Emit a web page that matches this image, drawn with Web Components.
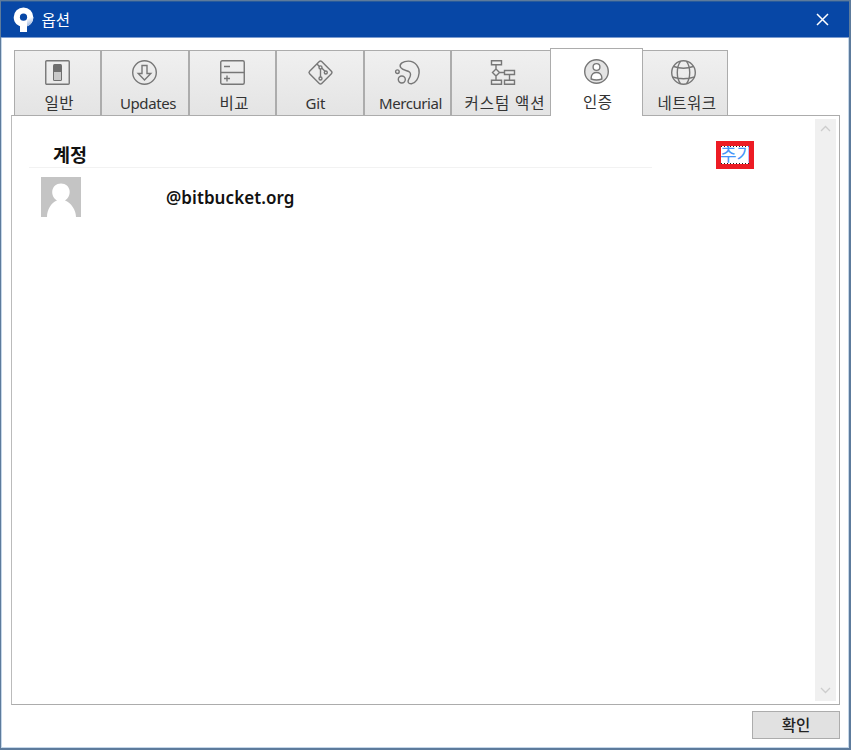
<!DOCTYPE html>
<html lang="ko"><head><meta charset="utf-8"><title>옵션</title>
<style>html,body{margin:0;height:100%;overflow:hidden}body{font-family:"Noto Sans","Noto Sans CJK KR",sans-serif;color:#333}</style></head><body>
<option-window>
<title-bar slot="title">옵션</title-bar>
<tab-strip slot="tabs">
<option-tab icon="general" style="width:87px;--icon:30px;--text:29.500px">일반</option-tab>
<option-tab icon="updates" style="width:88px;--icon:30px;--text:18px;--size:15px;--track:-.42px">Updates</option-tab>
<option-tab icon="compare" style="width:87px;--icon:30px;--text:29.500px">비교</option-tab>
<option-tab icon="git" style="width:88px;--icon:31px;--text:28.500px;--size:15px;--track:-.1px">Git</option-tab>
<option-tab icon="hg" style="width:87px;--icon:30px;--text:14px;--size:15px;--track:-.42px">Mercurial</option-tab>
<option-tab icon="custom" style="width:100px;--icon:38px;--text:12.500px;--track:.95px">커스텀 액션</option-tab>
<option-tab icon="auth" active style="width:93px;--icon:33px;--text:32px">인증</option-tab>
<option-tab icon="network" style="width:86px;--icon:28px;--text:14.500px;--track:.5px">네트워크</option-tab>
</tab-strip>
<account-panel slot="panel"><account-row>@bitbucket.org</account-row></account-panel>
<push-button slot="action">확인</push-button>
</option-window>
<script>
const define=(name,html,setup)=>customElements.define(name,class extends HTMLElement{
 constructor(){super();const t=document.createElement('template');t.innerHTML=html;this.attachShadow({mode:'open'}).append(t.content.cloneNode(true))}
 connectedCallback(){if(setup)setup(this)}
});
const icons={
general:'<rect x=".75" y=".75" width="23.5" height="23.5" rx="1"/><rect x="8" y="4" width="9" height="17" rx="1.5" fill="#6e6e6e" stroke="none"/><rect x="9" y="12" width="7" height="8" fill="#c8c8c8" stroke="none"/>',
updates:'<circle cx="12.5" cy="12.5" r="11.8"/><path d="M10 5.5h5v8h3.8L12.5 20l-6.3-6.5H10z"/>',
compare:'<rect x=".75" y=".75" width="23.5" height="23.5" rx="1.5"/><path d="M1 12.5h23M4 6.5h6M4 18.5h6M7 15.5v6"/>',
git:'<path d="M11.3 1.6q1.2-1.2 2.400 0l9.700 9.700q1.2 1.2 0 2.400l-9.700 9.700q-1.2 1.2-2.400 0l-9.700-9.700q-1.2-1.2 0-2.400zM9 4l2.400 2.500M12.500 9v8M14 8.200l3 3"/><circle cx="12.5" cy="7.4" r="1.5"/><circle cx="12.5" cy="18.5" r="1.5"/><circle cx="17.8" cy="12.5" r="1.5"/>',
hg:'<path d="M5.600 7.400C3.600 3.800 8.500 1 13.500 1.100C20.300 1.300 24.600 7 24.100 13C23.600 18.400 20.800 23.300 16.500 23.800C13.100 24 12.300 21.700 13.800 19.200C15.300 16.700 16.600 13.800 14.500 12C12.200 10 7.700 10.800 5.600 7.400z"/><circle cx="2.4" cy="11.7" r="1.8"/><circle cx="6.8" cy="19.5" r="3.5"/>',
custom:'<path d="M1.5.8h10v4h-10zM1.5 20.2h10v4h-10zM14.5 10.5h10v4h-10zM14.5 20.2h10v4h-10zM6 5v4m0 7v4M9.5 12.5h5M19.5 14.5v5.5M6 9l3.5 3.5L6 16l-3.5-3.5z"/>',
auth:'<circle cx="12.5" cy="12.5" r="11.8" fill="#e4e4e4"/><circle cx="12.5" cy="8" r="3.4" fill="#fff"/><path d="M7.2 20v-1.5c0-6.7 10.6-6.7 10.6 0V20q-5.3 2-10.6 0z" fill="#fff"/>',
network:'<circle cx="12.5" cy="12.5" r="11.8"/><path d="M9.5 1.3C5.2 7 5.2 18 9.5 23.7M15.5 1.3C19.8 7 19.8 18 15.5 23.7M2.7 6.5q9.8 3.5 19.6 0M1.2 17q11.3 3.5 22.6 0"/>'};
define('option-window',`<style>:host{display:flex;flex-direction:column;box-sizing:border-box;width:851px;height:750px;border:solid #5d7b9c;border-width:1px 2px 2px 1px;background:#fff;box-shadow:inset 1px 0 #c5d7e9,inset -1px -1px #c5d7e9}.body{padding:10px 9px 0 10px}.foot{display:flex;justify-content:flex-end;padding-top:6px}</style><slot name="title"></slot><div class="body"><slot name="tabs"></slot><slot name="panel"></slot><div class="foot"><slot name="action"></slot></div></div>`);
define('title-bar',`<style>:host{display:flex;align-items:center;box-sizing:border-box;height:37px;background:#0747a6;border-top:1px solid #285b9c;border-bottom:1px solid #7b9cd0;color:#fff;font-size:15.5px;padding-left:12px}.name{margin:0 0 0 7.5px;line-height:22px;padding-top:1px}.close{margin:0 20px 0 auto}svg{display:block}</style><svg width="21" height="26" viewBox="0 0 21 26"><defs><linearGradient id="g" x1=".9" y1="1" x2=".6" y2="0"><stop offset="0" stop-color="#7797cf"/><stop offset=".4" stop-color="#b5c8e6"/><stop offset="1" stop-color="#fff"/></linearGradient></defs><path fill="#fff" d="M10.500.5a9.800 9.800 0 0 1 9.800 9.800c0 5.800-4.100 8.500-6.300 9V25H7v-5.800C3.200 18 .7 14.600.7 10.300A9.800 9.800 0 0 1 10.500.5z"/><path fill="url(#g)" d="M14 10h6.300c0 5.800-4.100 8.500-6.300 9.300z"/><circle cx="10.5" cy="10.2" r="3.6" fill="#0747a6"/></svg><div class="name"><slot></slot></div><svg class="close" width="13" height="13" fill="none" stroke="#fff" stroke-width="1.5"><path d="M1 1l11 11M12 1L1 12"/></svg>`);
define('tab-strip',`<style>:host{display:flex;align-items:flex-end;height:67px;padding-left:3px}</style><slot></slot>`);
define('option-tab',`<style>:host{display:flex;flex-direction:column;box-sizing:border-box;flex:none;height:65px;border:1px solid #acacac;border-bottom:0;background:linear-gradient(#f0f0f0,#e4e4e4);padding-top:9px;color:#333}:host([active]){height:68px;margin:0 -1px -1px -1px;background:#fff;padding-top:10px;z-index:1}svg{display:block;flex:none;margin-left:var(--icon);overflow:visible}.label{padding-left:var(--text);font-size:var(--size,15.5px);letter-spacing:var(--track,.4px);line-height:22px;height:22px;margin-top:7px;white-space:nowrap}</style><svg width="25" height="25" fill="none" stroke="#777" stroke-width="1.4"></svg><div class="label"><slot></slot></div>`,e=>{e.shadowRoot.querySelector('svg').innerHTML=icons[e.getAttribute('icon')]});
define('account-panel',`<style>:host{display:flex;box-sizing:border-box;height:590px;border:1px solid #acacac;border-left-color:#bbb;padding:3px 2px 3px 17px;background:#fff}.content{flex:1}.heading{display:flex;justify-content:space-between;margin-top:22px;height:26px}h2{margin:0;padding-left:24px;box-sizing:border-box;width:623px;font-size:18.5px;font-weight:700;line-height:28px;height:27px;color:#111;border-bottom:1px solid #f2f2f2}mark-link{margin-right:61px}</style><section class="content"><div class="heading"><h2>계정</h2><mark-link>추가</mark-link></div><slot></slot></section><scroll-rail></scroll-rail>`);
define('mark-link',`<style>:host{display:block;box-sizing:border-box;width:38px;height:28px;border:5px solid #ed1c24;background:#fff;overflow:hidden}.text{box-sizing:border-box;height:18px;background:repeating-linear-gradient(90deg,#222 0 1px,#fff 1px 3px) top/100% 1px no-repeat,repeating-linear-gradient(90deg,#222 0 1px,#fff 1px 3px) bottom/100% 1px no-repeat;color:#4595fa;font-size:18px;line-height:17px;white-space:nowrap;overflow:hidden;text-indent:-1px}</style><div class="text"><slot></slot></div>`);
define('scroll-rail',`<style>:host{display:flex;flex-direction:column;justify-content:space-between;box-sizing:border-box;width:21px;padding:6px 5px 7px;background:#f0f0f0;margin-right:1px}svg{display:block}</style><svg width="11" height="7" fill="none" stroke="#cdcdcd" stroke-width="1.3"><path d="M1 6l4.5-4.5L10 6"/></svg><svg width="11" height="7" fill="none" stroke="#cdcdcd" stroke-width="1.3"><path d="M1 1l4.5 4.5L10 1"/></svg>`);
define('account-row',`<style>:host{display:flex;height:40px;margin-top:10px;padding-left:12px}.name{padding:7px 0 0 85px;font-size:17px;font-weight:600;letter-spacing:.07px;line-height:28px;color:#111;white-space:nowrap}</style><svg width="40" height="40"><path fill="#c4c4c4" d="M0 0h40v40H0z"/><path fill="#fff" d="M6 40c0-7 4-14.500 10-16.500C8.500 19 10 6.500 20 6.500S31.500 19 24 23.500C30 25.500 35 33 35 40z"/></svg><div class="name"><slot></slot></div>`);
define('push-button',`<style>:host{display:flex;align-items:center;justify-content:center;box-sizing:border-box;width:88px;height:28px;border:1px solid #acacac;background:#e1e1e1;color:#222;font-size:15.5px;font-weight:500;line-height:22px}</style><slot></slot>`);
</script></body></html>
